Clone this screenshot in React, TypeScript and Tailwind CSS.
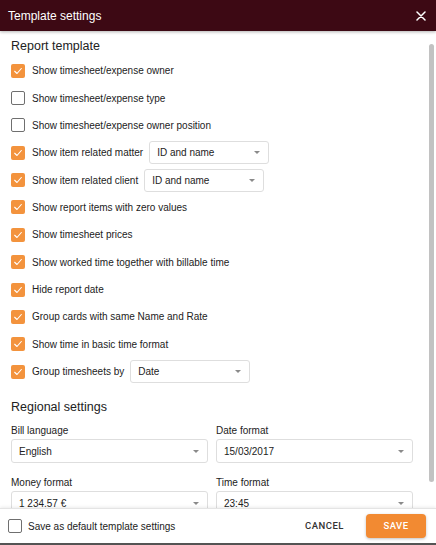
import React from "react";

const font = { fontFamily: "'Liberation Sans', Arial, sans-serif" };

function Check({ checked }: { checked: boolean }) {
  if (checked) {
    return (
      <span className="flex h-[14px] w-[14px] shrink-0 items-center justify-center rounded-[2px] bg-[#f3933d]">
        <svg viewBox="0 0 12 12" className="h-[10px] w-[10px]" fill="none">
          <path d="M2 6.3 L4.8 9 L10 3" stroke="white" strokeWidth="1.3" strokeLinecap="round" strokeLinejoin="round" />
        </svg>
      </span>
    );
  }
  return <span className="h-[14px] w-[14px] shrink-0 rounded-[2px] border-[1.5px] border-[#6f6f6f] bg-white" />;
}

function Select({ value, className }: { value: string; className: string }) {
  return (
    <div
      className={`flex h-[23px] items-center justify-between rounded-[3px] border border-[#dedede] bg-white pl-[7px] pr-[8px] text-[10px] text-[#222] ${className}`}
    >
      <span>{value}</span>
      <svg viewBox="0 0 8 4" className="h-[3px] w-[6px]">
        <path d="M0 0 L8 0 L4 4 Z" fill="#8a8a8a" />
      </svg>
    </div>
  );
}

type Row = { label: string; checked: boolean; select?: string };

const rows: Row[] = [
  { label: "Show timesheet/expense owner", checked: true },
  { label: "Show timesheet/expense type", checked: false },
  { label: "Show timesheet/expense owner position", checked: false },
  { label: "Show item related matter", checked: true, select: "ID and name" },
  { label: "Show item related client", checked: true, select: "ID and name" },
  { label: "Show report items with zero values", checked: true },
  { label: "Show timesheet prices", checked: true },
  { label: "Show worked time together with billable time", checked: true },
  { label: "Hide report date", checked: true },
  { label: "Group cards with same Name and Rate", checked: true },
  { label: "Show time in basic time format", checked: true },
  { label: "Group timesheets by", checked: true, select: "Date" },
];

function Field({ label, value }: { label: string; value: string }) {
  return (
    <div className="flex flex-col">
      <div className="h-[16px] text-[10px] leading-[16px] text-[#222]">{label}</div>
      <Select value={value} className="h-[24px] w-full" />
    </div>
  );
}

export default function App() {
  return (
    <div style={font} className="relative flex h-[545px] w-[436px] flex-col overflow-hidden bg-white">
      {/* Header */}
      <div className="z-10 flex h-[31px] shrink-0 items-center justify-between bg-[#3d0914] pl-[8px] pr-[10px] shadow-[0_1px_3px_rgba(0,0,0,0.3)]">
        <span className="text-[12px] text-white">Template settings</span>
        <svg viewBox="0 0 10 10" className="h-[10px] w-[10px]" fill="none">
          <path d="M1 1 L9 9 M9 1 L1 9" stroke="white" strokeWidth="1.5" strokeLinecap="round" />
        </svg>
      </div>

      {/* Body */}
      <div className="relative flex-1 overflow-hidden">
        <div className="pl-[11px] pr-[23px]">
          <div className="mt-[6px] h-[19px] text-[12.5px] leading-[19px] text-[#222]">Report template</div>
          <div className="mt-[1px] flex flex-col">
            {rows.map((r, i) => (
              <div key={i} className="flex h-[27.36px] items-center">
                <Check checked={r.checked} />
                <span className="ml-[7px] text-[10px] text-[#222]">{r.label}</span>
                {r.select && <Select value={r.select} className="ml-[6px] w-[120px]" />}
              </div>
            ))}
          </div>
          <div className="mt-[12px] h-[20px] text-[12.5px] leading-[20px] text-[#222]">Regional settings</div>
          <div className="mt-[6px] grid grid-cols-2 gap-x-[8px] gap-y-[12px]">
            <Field label="Bill language" value="English" />
            <Field label="Date format" value="15/03/2017" />
            <Field label="Money format" value="1 234.57 €" />
            <Field label="Time format" value="23:45" />
          </div>
        </div>
        {/* scrollbar thumb */}
        <div className="absolute right-[2px] top-[13px] h-[438px] w-[5px] rounded-full bg-[#c2c2c2]" />
      </div>

      {/* Footer */}
      <div className="z-10 flex h-[35px] shrink-0 items-center border-t border-[#e4e4e4] bg-white pl-[8px] pr-[10px] shadow-[0_-1px_3px_rgba(0,0,0,0.08)]">
        <Check checked={false} />
        <span className="ml-[6px] text-[10px] text-[#222]">Save as default template settings</span>
        <span className="ml-auto mr-[22px] font-['Roboto'] text-[9.5px] font-medium tracking-[0.5px] text-[#333]">CANCEL</span>
        <button className="flex h-[24px] w-[60px] items-center justify-center rounded-[4px] bg-[#f28a32] font-['Roboto'] text-[9.5px] font-medium tracking-[0.5px] text-white shadow-[0_1px_3px_rgba(0,0,0,0.25)]">
          SAVE
        </button>
      </div>
      <div className="h-[2px] shrink-0 bg-[#555]" />
    </div>
  );
}
